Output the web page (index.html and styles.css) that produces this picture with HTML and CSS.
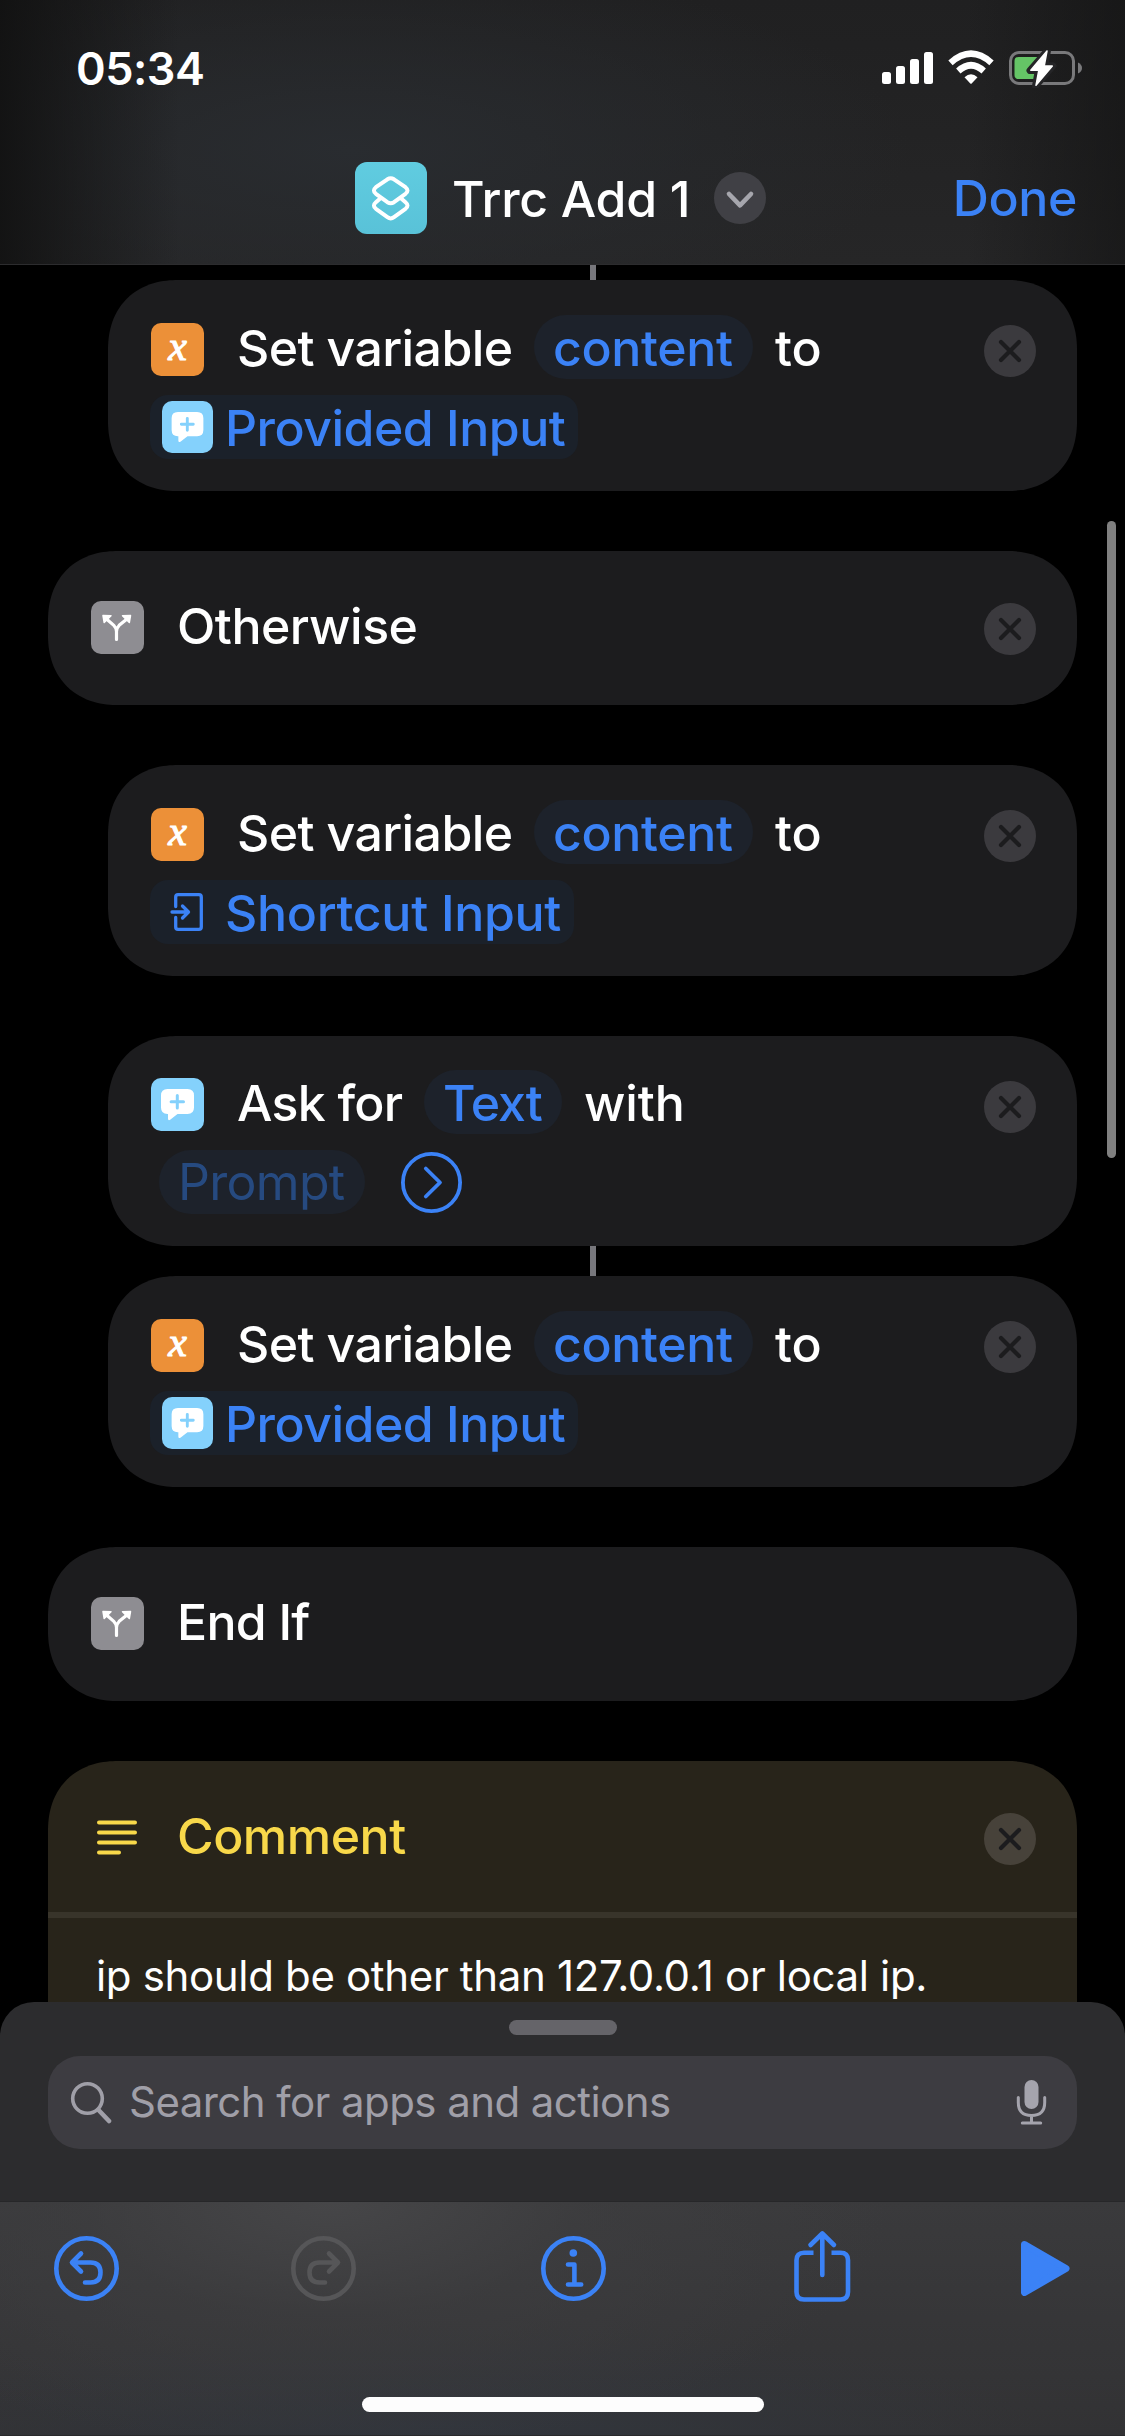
FILE: index.html
```html
<!DOCTYPE html>
<html lang="en">
<head>
<meta charset="utf-8">
<title>Trrc Add 1</title>
<link rel="stylesheet" href="styles.css">
</head>
<body>
<svg class="symbols" aria-hidden="true">
  <symbol id="close" viewBox="0 0 52 52">
    <circle class="disc" cx="26" cy="26" r="26"/>
    <path class="cross" d="M17 17L35 35M35 17L17 35" fill="none" stroke-width="4.2" stroke-linecap="round"/>
  </symbol>
  <symbol id="ask" viewBox="0 0 53 53">
    <path d="M16.500 11H36.500Q43 11 43 17.500V29.500Q43 36 36.500 36H26.500L19.500 41.600Q17 43.200 17 40.500V36H16.500Q10 36 10 29.500V17.500Q10 11 16.500 11Z" fill="#fff"/>
    <path d="M26.300 17.500V29.900M20.100 23.700H32.500" stroke="#84d1fc" stroke-width="3" stroke-linecap="round"/>
  </symbol>
  <symbol id="fork" viewBox="0 0 53 53">
    <path d="M25.500 38.500V30.500Q25.500 27 22.800 24.300L15.500 18M25.500 30.500Q25.500 27 28.200 24.300L36 18" fill="none" stroke="#fff" stroke-width="3.200" stroke-linecap="round"/>
    <path d="M12 14.500L20 14.800L13.200 21.500ZM39.500 14.500L31.500 14.800L38.300 21.500Z" fill="#fff" stroke="#fff" stroke-width="1.500" stroke-linejoin="round"/>
  </symbol>
  <symbol id="input" viewBox="0 0 51 52">
    <path d="M13.700 20.500V11Q13.700 8.700 16 8.700H37Q39.300 8.700 39.300 11V41Q39.300 43.300 37 43.300H16Q13.700 43.300 13.700 41V31.500M10 26H26M20.500 20L26.500 26L20.500 32" fill="none" stroke="#3b82f6" stroke-width="3.300" stroke-linecap="round" stroke-linejoin="round"/>
  </symbol>
</svg>

<header class="header">
  <div class="status">
    <span class="time">05:34</span>
    <svg class="status-icons" width="202" height="38" viewBox="0 0 202 38">
      <g fill="#fff">
        <rect x="2" y="22" width="9" height="12" rx="2.500"/>
        <rect x="16" y="16" width="9" height="18" rx="2.500"/>
        <rect x="30" y="9" width="9" height="25" rx="2.500"/>
        <rect x="44" y="2" width="9" height="32" rx="2.500"/>
      </g>
      <g fill="none" stroke="#fff" stroke-width="6.500">
        <path d="M70.500 12.800Q91 -5.500 111.500 12.800"/>
        <path d="M78.300 21Q91 9.500 103.700 21"/>
      </g>
      <path d="M84.500 27.300Q91 21.300 97.500 27.300L91.700 33.400Q91 34 90.300 33.400Z" fill="#fff"/>
      <rect x="130.500" y="2.500" width="63" height="31" rx="8.500" fill="none" stroke="#79797b" stroke-width="3"/>
      <path d="M198 12.500Q202 14.500 202 18T198 23.500Z" fill="#79797b"/>
      <rect x="134.500" y="7" width="27" height="22" rx="4" fill="#65c466"/>
      <path d="M167.500 0.500L150 20.500H158.300L155.500 36L173 15.800H164.800Z" fill="#fff" stroke="#252527" stroke-width="7" stroke-linejoin="round"/>
      <path d="M167 1L150.800 20.300H158.800L156 35.300L172.300 16H164.200Z" fill="#fff" stroke="#fff" stroke-width="1.500" stroke-linejoin="round"/>
    </svg>
  </div>
  <div class="nav">
    <div class="nav-title">
      <svg class="app-icon" width="72" height="72" viewBox="0 0 72 72" fill="none" stroke="#fff" stroke-width="4" stroke-linejoin="round">
        <path d="M39 17.300L50.500 25.200Q54.500 28.500 50.500 31.800L39 40.200Q35.700 42.200 32.400 40.200L20.900 31.800Q16.900 28.500 20.900 25.200L32.400 17.300Q35.700 15.300 39 17.300Z"/>
        <path d="M25.500 36.300L20.900 40.200Q16.900 43.500 20.900 46.800L32.400 55.200Q35.700 57.700 39 55.200L50.500 46.800Q54.500 43.500 50.500 40.200L45.900 36.300"/>
      </svg>
      <h1 class="title">Trrc Add 1</h1>
      <svg width="52" height="52" viewBox="0 0 52 52"><circle cx="26" cy="26" r="26" fill="#404045"/><path d="M15 22L26 33.300L37 22" fill="none" stroke="#a6a6ad" stroke-width="4.600" stroke-linecap="round" stroke-linejoin="round"/></svg>
    </div>
    <span class="done">Done</span>
  </div>
</header>

<main class="canvas">
  <div class="connector first"></div>

  <section class="card nested">
    <div class="row">
      <span class="tile orange">x</span><span class="label set">Set variable</span><span class="pill content">content</span><span class="label">to</span>
      <svg class="close"><use href="#close"/></svg>
    </div>
    <div class="row second">
      <span class="token"><svg class="token-icon sky"><use href="#ask"/></svg><span class="token-name provided">Provided Input</span></span>
    </div>
  </section>

  <section class="card single">
    <svg class="tile gray"><use href="#fork"/></svg><span class="label otherwise">Otherwise</span>
    <svg class="close"><use href="#close"/></svg>
  </section>

  <section class="card nested">
    <div class="row">
      <span class="tile orange">x</span><span class="label set">Set variable</span><span class="pill content">content</span><span class="label">to</span>
      <svg class="close"><use href="#close"/></svg>
    </div>
    <div class="row second">
      <span class="token"><svg class="token-icon"><use href="#input"/></svg><span class="token-name">Shortcut Input</span></span>
    </div>
  </section>

  <section class="card nested ask">
    <div class="row">
      <svg class="tile sky"><use href="#ask"/></svg><span class="label askfor">Ask for</span><span class="pill text">Text</span><span class="label with">with</span>
      <svg class="close"><use href="#close"/></svg>
    </div>
    <div class="row second">
      <span class="pill prompt">Prompt</span>
      <svg class="expand" viewBox="0 0 61 61" fill="none" stroke="#3b82f6" stroke-linecap="round" stroke-linejoin="round"><circle cx="30.500" cy="30.500" r="28.600" stroke-width="3.800"/><path d="M24.800 16.500L39 30.500L24.800 44.500" stroke-width="3.800"/></svg>
    </div>
  </section>
  <div class="connector"></div>

  <section class="card nested">
    <div class="row">
      <span class="tile orange">x</span><span class="label set">Set variable</span><span class="pill content">content</span><span class="label">to</span>
      <svg class="close"><use href="#close"/></svg>
    </div>
    <div class="row second">
      <span class="token"><svg class="token-icon sky"><use href="#ask"/></svg><span class="token-name provided">Provided Input</span></span>
    </div>
  </section>

  <section class="card single">
    <svg class="tile gray"><use href="#fork"/></svg><span class="label endif">End If</span>
  </section>

  <section class="card comment">
    <div class="comment-head">
      <svg class="tile" viewBox="0 0 53 53" stroke="#f8d84a" stroke-width="4" stroke-linecap="round"><path d="M8 13.500H44M8 23.500H44M8 33.500H44M8 43.500H28"/></svg><span class="label otherwise">Comment</span>
      <svg class="close"><use href="#close"/></svg>
    </div>
    <p class="comment-body">ip should be other than 127.0.0.1 or local ip.</p>
  </section>

  <div class="scrollbar"></div>
</main>

<section class="sheet">
  <div class="grabber"></div>
  <div class="search">
    <svg width="42" height="43" viewBox="0 0 42 43" fill="none" stroke="#a09fa8" stroke-linecap="round"><circle cx="17.500" cy="17.500" r="14.800" stroke-width="3.600"/><path d="M28.500 29L39 40" stroke-width="4.600"/></svg>
    <span class="placeholder">Search for apps and actions</span>
    <svg width="32" height="46" viewBox="0 0 32 46"><rect x="8.500" y="0" width="14" height="29" rx="7" fill="#a5a4ad"/><path d="M2.300 17.500V22.500Q2.300 35.500 15.500 35.500T28.700 22.500V17.500M15.500 35.500V43M6.300 43H24.700" fill="none" stroke="#a5a4ad" stroke-width="3" stroke-linecap="round"/></svg>
  </div>
</section>

<footer class="toolbar">
  <div class="actions">
    <svg class="undo" width="65" height="65" viewBox="0 0 65 65"><circle cx="32.500" cy="32.500" r="30.200"/><path d="M27 17.500L18 26.500L27 35.500M18.500 26.500H36.500Q46.500 26.500 46.500 36.500T36.500 46.500H31"/></svg>
    <svg class="redo" width="65" height="65" viewBox="0 0 65 65"><circle cx="32.500" cy="32.500" r="30.200"/><path d="M38 17.500L47 26.500L38 35.500M46.500 26.500H28.500Q18.500 26.500 18.500 36.500T28.500 46.500H34"/></svg>
    <svg class="info" width="65" height="65" viewBox="0 0 65 65"><circle cx="32.500" cy="32.500" r="30.200"/><circle class="dot" cx="32.300" cy="17" r="3.800"/><path d="M27 28.500H33.400V48.500M27 48.500H40.200"/></svg>
    <svg class="share" width="57" height="73" viewBox="0 0 57 73"><path d="M19.500 22.700H10Q2.500 22.700 2.500 30.200V62Q2.500 69.500 10 69.500H46.500Q54 69.500 54 62V30.200Q54 22.700 46.500 22.700H37.500" stroke-linecap="butt"/><path d="M28.300 45V3.500M16.500 15L28.300 3.500L40 15"/></svg>
    <svg class="play" width="49" height="55" viewBox="0 0 49 55"><path d="M3.500 3.500L45 27.500L3.500 51.500Z"/></svg>
  </div>
  <div class="home"></div>
</footer>
</body>
</html>
```
FILE: styles.css
```css
* { box-sizing: border-box; }

body {
  margin: 0;
  width: 1125px;
  height: 2436px;
  display: flex;
  flex-direction: column;
  overflow: hidden;
  background: #000;
  color: #fff;
  font-family: Inter, "Liberation Sans", sans-serif;
  font-size: 50px;
  font-weight: 450;
  line-height: 64px;
}

svg { display: block; flex: none; }
.symbols { position: absolute; width: 0; height: 0; }

/* Header */
.header {
  flex: none;
  height: 265px;
  border-bottom: 1px solid #2c2c2e;
  background:
    linear-gradient(90deg, rgba(16, 16, 16, .85) 0, rgba(16, 16, 16, .5) 70px, rgba(16, 16, 16, 0) 180px),
    linear-gradient(270deg, rgba(18, 18, 18, .6) 0, rgba(18, 18, 18, 0) 160px),
    radial-gradient(ellipse 560px 190px at 350px 150px, #292c30 0, rgba(38, 39, 41, 0) 100%),
    linear-gradient(180deg, #202021, #262627);
}
.status {
  height: 137px;
  padding: 0 43px 0 76px;
  display: flex;
  align-items: center;
  justify-content: space-between;
}
.time { font-size: 45px; font-weight: 560; letter-spacing: -.5px; }
.nav {
  margin-top: 25px;
  height: 72px;
  padding: 0 48px 0 355px;
  display: flex;
  align-items: center;
  justify-content: space-between;
}
.nav-title { display: flex; align-items: center; }
.app-icon { border-radius: 12px; background: linear-gradient(#60cce0, #59c2d8); }
.title { width: 238px; margin: 0 24px 0 25px; padding-top: 1px; font-size: 50px; font-weight: 550; letter-spacing: -.3px; white-space: nowrap; }
.done { color: #3b82f6; font-weight: 550; letter-spacing: -.4px; }

/* Action list */
.canvas {
  position: relative;
  flex: none;
  height: 1737px;
  overflow: hidden;
  padding: 0 48px;
}
.connector {
  width: 6px;
  height: 30px;
  margin: -60px 0 0 542px;
  background: #77777c;
}
.connector.first { height: 15px; margin-top: 0; }
.card {
  height: 211px;
  margin-bottom: 60px;
  border-radius: 70px;
  corner-shape: superellipse(1.15);
  background: #1c1c1e;
  white-space: nowrap;
}
.nested { margin-left: 60px; padding: 35px 41px 0 43px; }
.nested.ask { height: 210px; padding-top: 34px; }
.row { display: flex; align-items: center; height: 64px; }
.row.second { margin-top: 16px; }
.tile {
  width: 53px;
  height: 53px;
  flex: none;
  border-radius: 10px;
}
.row .tile { position: relative; top: 2px; }
.orange {
  background: #ec9038;
  font: italic 42px/46px "Liberation Serif", serif;
  -webkit-text-stroke: 1.1px #fff;
  text-align: center;
}
.sky { background: #84d1fc; }
.gray { background: #8e8d92; }
.label { letter-spacing: -.1px; }
.row .label, .token-name { padding-top: 2px; }
.tile + .label { margin-left: 33px; }
.pill + .label { margin-left: 22px; }
.label.set { letter-spacing: -.6px; }
.label.otherwise { letter-spacing: -.5px; }
.label.askfor, .label.endif { letter-spacing: -.75px; }
.label.with { letter-spacing: -.1px; }
.pill {
  flex: none;
  height: 64px;
  padding-left: 19px;
  border-radius: 32px;
  background: #1d222b;
  color: #3b82f6;
  line-height: 66px;
}
.set { width: 276px; }
.askfor { width: 166px; }
.content { width: 219px; margin-left: 21px; letter-spacing: -.35px; }
.text { width: 138px; margin-left: 21px; letter-spacing: -1px; }
.prompt { width: 206px; margin-left: 8px; font-weight: 400; line-height: 65px; letter-spacing: -.7px; color: #264a80; }
.close { width: 52px; height: 52px; margin-left: auto; position: relative; top: 4px; fill: #3b3a3e; }
.ask .close { top: 5px; }
.cross { stroke: #1c1c1e; }
.expand { width: 61px; height: 61px; margin-left: 36px; }
.token {
  display: flex;
  align-items: center;
  width: 428px;
  height: 64px;
  margin-left: -1px;
  padding-left: 12px;
  border-radius: 18px;
  background: #1b212a;
  color: #3b82f6;
}
.token-icon { width: 51px; height: 52px; margin-right: 12px; border-radius: 10px; }
.token-name { letter-spacing: -.3px; }
.token-name.provided { letter-spacing: -.5px; }
.token:not(:has(.provided)) { width: 424px; }

.single, .comment-head {
  height: 154px;
  padding: 0 41px 0 43px;
  display: flex;
  align-items: center;
}
.single .tile { margin-bottom: 1px; }
.single .label { padding-bottom: 4px; }
.single .close { top: 1px; }

.comment { height: 320px; margin: 0; background: #28241a; border-bottom-left-radius: 0; border-bottom-right-radius: 0; }
.comment-head { height: 157px; padding-bottom: 3px; border-bottom: 6px solid #38342a; }
.comment-head .label { padding-top: 2px; color: #f8d84a; }
.comment-head .close { top: 4px; fill: #47423a; }
.comment-head .close .cross { stroke: #28241a; }
.comment-body { margin: 26px 0 0 48px; font-size: 42px; font-weight: 400; letter-spacing: -.34px; }

.scrollbar {
  position: absolute;
  right: 9px;
  top: 256px;
  width: 9px;
  height: 637px;
  border-radius: 5px;
  background: #808080;
}

/* Search sheet */
.sheet {
  flex: none;
  height: 200px;
  padding: 18px 48px 0;
  border-radius: 34px 34px 0 0;
  border-bottom: 1px solid #272729;
  background: #2c2c2e;
}
.grabber { width: 108px; height: 15px; margin: 0 auto; border-radius: 8px; background: #656469; }
.search {
  height: 93px;
  margin-top: 21px;
  padding: 0 29px 0 22px;
  display: flex;
  align-items: center;
  border-radius: 32px;
  background: #3d3c41;
}
.placeholder { flex: 1; margin-left: 17px; padding-bottom: 2px; font-size: 42px; font-weight: 400; letter-spacing: -.57px; color: #a09fa8; }

/* Toolbar */
.toolbar {
  flex: none;
  height: 234px;
  border-bottom: 1px solid #2a2a2c;
  background:
    radial-gradient(ellipse 560px 250px at 330px 0, #464648 0, rgba(62, 62, 64, .6) 45%, rgba(58, 58, 60, 0) 100%),
    radial-gradient(ellipse 600px 110px at 450px 234px, #31353c 0, rgba(49, 53, 58, 0) 100%),
    linear-gradient(180deg, #3a3a3c, #323234);
}
.actions {
  height: 195px;
  padding: 28px 0 0 54px;
  display: flex;
  align-items: flex-start;
  fill: none;
  stroke: #3b82f6;
  stroke-width: 4.600px;
  stroke-linecap: round;
  stroke-linejoin: round;
}
.undo, .redo, .info { margin-top: 6px; }
.redo { margin-left: 172px; stroke: #565658; }
.info { margin-left: 185px; }
.dot { fill: #3b82f6; stroke: none; }
.share { margin-left: 188px; }
.play { margin: 11px 0 0 170px; fill: #3b82f6; stroke-width: 7px; }
.home { width: 402px; height: 15px; margin: 0 auto; border-radius: 8px; background: #fdfdfd; }
```
